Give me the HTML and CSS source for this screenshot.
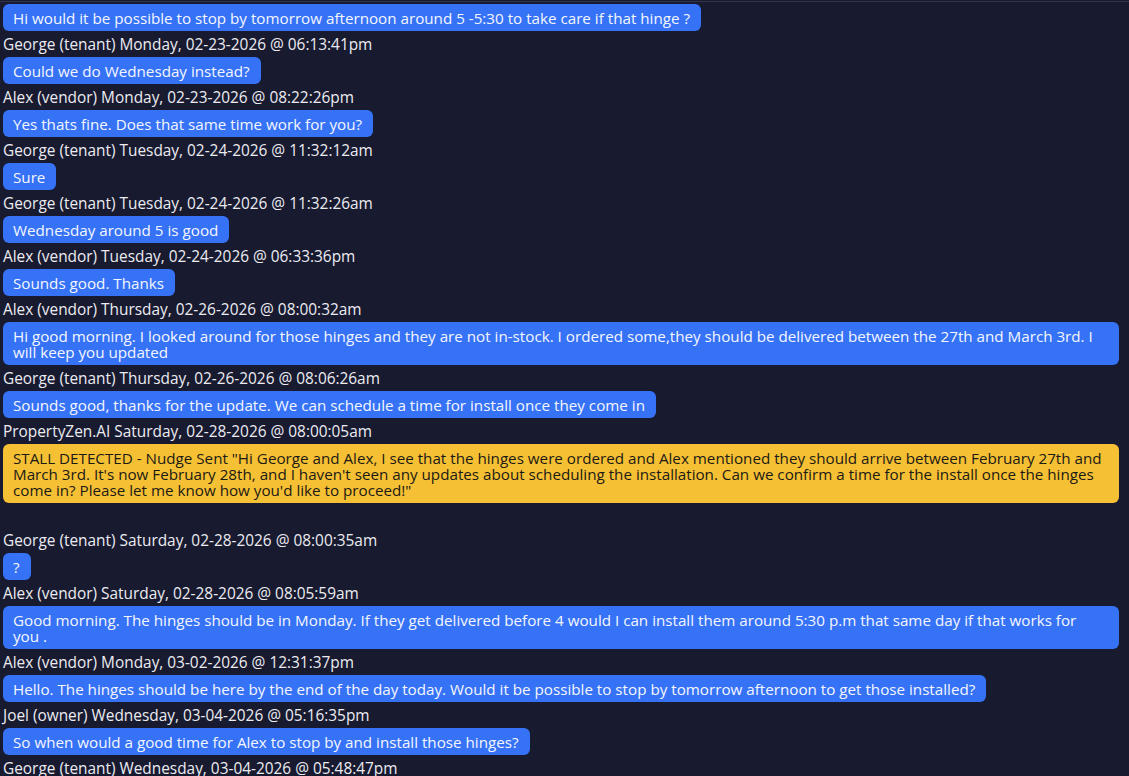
FILE: index.html
```html
<!DOCTYPE html>
<html lang="en">
<head>
<meta charset="utf-8">
<title>Conversation</title>
<link rel="stylesheet" href="styles.css">
</head>
<body>
<div class="chat">
  <div class="bubble">Hi would it be possible to stop by tomorrow afternoon around 5 -5:30 to take care if that hinge ?</div>
  <div class="meta">George (tenant) Monday, 02-23-2026 @ 06:13:41pm</div>
  <div class="bubble">Could we do Wednesday instead?</div>
  <div class="meta">Alex (vendor) Monday, 02-23-2026 @ 08:22:26pm</div>
  <div class="bubble">Yes thats fine. Does that same time work for you?</div>
  <div class="meta">George (tenant) Tuesday, 02-24-2026 @ 11:32:12am</div>
  <div class="bubble">Sure</div>
  <div class="meta">George (tenant) Tuesday, 02-24-2026 @ 11:32:26am</div>
  <div class="bubble">Wednesday around 5 is good</div>
  <div class="meta">Alex (vendor) Tuesday, 02-24-2026 @ 06:33:36pm</div>
  <div class="bubble">Sounds good. Thanks</div>
  <div class="meta">Alex (vendor) Thursday, 02-26-2026 @ 08:00:32am</div>
  <div class="bubble">Hi good morning. I looked around for those hinges and they are not in-stock. I ordered some,they should be delivered between the 27th and March 3rd. I will keep you updated</div>
  <div class="meta">George (tenant) Thursday, 02-26-2026 @ 08:06:26am</div>
  <div class="bubble">Sounds good, thanks for the update. We can schedule a time for install once they come in</div>
  <div class="meta">PropertyZen.AI Saturday, 02-28-2026 @ 08:00:05am</div>
  <div class="bubble bubble-alert">STALL DETECTED - Nudge Sent "Hi George and Alex, I see that the hinges were ordered and Alex mentioned they should arrive between February 27th and March 3rd. It's now February 28th, and I haven't seen any updates about scheduling the installation. Can we confirm a time for the install once the hinges come in? Please let me know how you'd like to proceed!"</div>
  <div class="spacer"></div>
  <div class="meta">George (tenant) Saturday, 02-28-2026 @ 08:00:35am</div>
  <div class="bubble">?</div>
  <div class="meta">Alex (vendor) Saturday, 02-28-2026 @ 08:05:59am</div>
  <div class="bubble">Good morning. The hinges should be in Monday. If they get delivered before 4 would I can install them around 5:30 p.m that same day if that works for you&nbsp;.</div>
  <div class="meta">Alex (vendor) Monday, 03-02-2026 @ 12:31:37pm</div>
  <div class="bubble">Hello. The hinges should be here by the end of the day today. Would it be possible to stop by tomorrow afternoon to get those installed?</div>
  <div class="meta">Joel (owner) Wednesday, 03-04-2026 @ 05:16:35pm</div>
  <div class="bubble">So when would a good time for Alex to stop by and install those hinges?</div>
  <div class="meta">George (tenant) Wednesday, 03-04-2026 @ 05:48:47pm</div>
</div>
</body>
</html>
```

FILE: styles.css
```css
html, body {
  margin: 0;
  padding: 0;
  background: #181a30;
  height: 100%;
  overflow: hidden;
}

body {
  font-family: "Open Sans", "Noto Sans", sans-serif;
  font-size: 15.4px;
  color: #ececf2;
}

.chat {
  margin-top: 1px;
  border-top: 1px solid #34364c;
  padding: 2px 10px 0 3px;
  display: flex;
  flex-direction: column;
  align-items: flex-start;
}

.bubble {
  background: #3672f5;
  color: #f4f6ff;
  border-radius: 6px;
  padding: 6px 11px 5px 10px;
  font-size: 15.2px;
  line-height: 16px;
  box-sizing: border-box;
}

.bubble-alert {
  background: #f6c034;
  color: #1c1a14;
}

.meta {
  line-height: 20px;
  padding: 4px 0 2px 0;
  color: #ececf0;
}

.spacer {
  height: 24px;
}
```
